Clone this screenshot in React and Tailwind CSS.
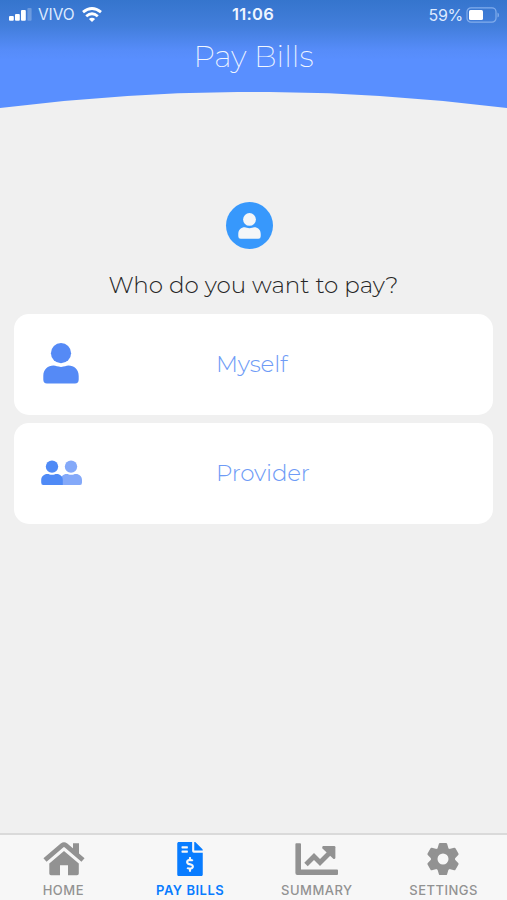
import React from "react";
import { FaFileInvoiceDollar } from "react-icons/fa";

function Person({ className }) {
  return (
    <svg viewBox="0 0 36 41" className={className} fill="currentColor">
      <circle cx="18" cy="10.2" r="10.1" />
      <path d="M.3 36.5V33C.3 26.5 5 22.6 10.5 22.6C13 22.6 14.5 23.9 18 23.9S23 22.6 25.5 22.6C31 22.6 35.7 26.5 35.7 33V36.5Q35.7 40.5 32 40.5H4Q.3 40.5 .3 36.5Z" />
    </svg>
  );
}

function People() {
  return (
    <svg viewBox="0 0 41 25" className="mb-[2px] h-[25px] w-[41px]">
      <g fill="#84a9f9">
        <circle cx="30" cy="6.6" r="6.2" />
        <path d="M19.5 22.5V20C19.5 16.5 22.5 14 25.5 14C27.5 14 28 14.8 30.2 14.8S33 14 35 14C38.2 14 41 16.5 41 20V22.5Q41 25 39 25H21.5Q19.5 25 19.5 22.5Z" />
      </g>
      <g fill="#4f8af6">
        <circle cx="11" cy="6.6" r="6.2" />
        <path d="M.2 22.5V20C.2 16.5 3.2 14 6.2 14C8.2 14 8.8 14.8 11 14.8S13.8 14 15.8 14C19 14 21.8 16.5 21.8 20V25H2.2Q.2 25 .2 22.5Z" />
      </g>
    </svg>
  );
}

function HomeIcon() {
  return (
    <svg viewBox="0 0 42 34" className="ml-[1px] h-[34px] w-[42px]" fill="currentColor">
      <path d="M30 1.2H36V14L30 9Z" />
      <path d="M2 18L19.2 3.3Q21 1.9 22.8 3.3L40 18" fill="none" stroke="currentColor" strokeWidth="4.8" />
      <path d="M21 8.9L35.8 21.5V31.5Q35.8 33.2 34 33.2H25V23.3H17V33.2H8Q6.3 33.2 6.3 31.5V21.5Z" />
    </svg>
  );
}

function ChartIcon() {
  return (
    <svg viewBox="0 0 43 34" className="h-[34px] w-[43px]" fill="currentColor">
      <path d="M1.3 1.2H5.1Q6 1.2 6 2.2V27.5H42.1Q43 27.5 43 28.4V32Q43 32.9 42 32.9H2.3Q.4 32.9 .4 31V2.2Q.4 1.2 1.3 1.2Z" />
      <path d="M11 22.5L19 14.5L25 20.5L35 10.5" fill="none" stroke="currentColor" strokeWidth="4.9" strokeLinejoin="miter" strokeLinecap="butt" />
      <path d="M28 4H39.2Q40.4 4 40.4 5.2V16Q39.6 17.8 38 16.5L27.5 6.4Q26.5 4.7 28 4Z" />
    </svg>
  );
}

function GearIcon() {
  return (
    <svg viewBox="-17 -17 34 34" className="mr-[1px] h-[34px] w-[34px]" fill="none" stroke="currentColor">
      <circle r="8.8" strokeWidth="6.6" />
      <g fill="currentColor" stroke="none">
        {[0, 60, 120, 180, 240, 300].map((angle) => (
          <path key={angle} d="M-5.5-10.5L-4.1-15.2Q-3.9-16.1-3-16.1H3Q3.9-16.1 4.1-15.2L5.5-10.5Z" transform={`rotate(${angle})`} />
        ))}
      </g>
    </svg>
  );
}

function StatusBar() {
  return (
    <div className="flex h-[29px] items-center justify-between pl-[9px] pr-[7px] font-['Inter','Liberation_Sans',sans-serif] text-[16px] text-[#deebff]">
      <div className="flex w-[180px] items-center">
        <svg viewBox="0 0 24 13" className="mr-[5px] h-[13px] w-[24px]" fill="#fff">
          <rect x="0" y="8" width="4.8" height="4.7" rx="1" />
          <rect x="6" y="6" width="4.8" height="6.7" rx="1" />
          <rect x="12" y="2" width="4.8" height="10.7" rx="1" />
          <rect x="18.4" y="0" width="4.2" height="12.7" rx="1" opacity=".25" />
        </svg>
        <span className="w-[38px] text-[15.5px] tracking-[-0.1px]">VIVO</span>
        <svg viewBox="0 0 20 15" className="ml-[6px] h-[15px] w-[20px]" fill="none" stroke="#fff" strokeWidth="2.8">
          <path d="M1 5.2Q10-2.3 19 5.2" />
          <path d="M4.2 9.3Q10 4.3 15.8 9.3" />
          <path d="M10 15L6.9 12Q10 9.4 13.1 12Z" fill="#fff" stroke="none" />
        </svg>
      </div>
      <span className="text-[16.5px] font-semibold tracking-[0.3px] text-[#eef5ff]">11:06</span>
      <div className="flex w-[183px] items-center justify-end">
        <span className="mr-[3px] text-[16px] tracking-[-0.3px]">59%</span>
        <svg viewBox="0 0 34 16" className="h-[16px] w-[34px]">
          <rect x="1" y=".8" width="29" height="14.4" rx="4" fill="none" stroke="#82adec" strokeWidth="1.2" />
          <rect x="3" y="3" width="14" height="10" rx="1.5" fill="#fff" />
          <path d="M31.5 5.5Q33 6 33 8T31.5 10.5Z" fill="#82adec" />
        </svg>
      </div>
    </div>
  );
}

function Choice({ icon, label }) {
  return (
    <button className="flex h-[101px] w-full items-center rounded-[15px] bg-white text-left">
      <span className="flex w-[202px] pl-[27px]">{icon}</span>
      <span className="text-[23px] font-light tracking-[-0.15px] text-[#6e9bf6]">{label}</span>
    </button>
  );
}

function Tab({ icon, label, active, className }) {
  return (
    <div className={`flex flex-1 flex-col items-center ${active ? "text-[#087cff]" : "text-[#929292]"}`}>
      <div className="flex h-[34px] items-center">{icon}</div>
      <span className={`mt-[6px] whitespace-nowrap text-[13px] leading-[16px] ${className}`}>{label}</span>
    </div>
  );
}

export default function App() {
  return (
    <div className="flex h-[900px] w-[507px] flex-col overflow-hidden bg-[#f0f0f0] font-['Montserrat','Inter','Liberation_Sans',sans-serif]">
      <header className="flex h-[109px] flex-col bg-[linear-gradient(#3575cd_0px,#427edb_26px,#568cf9_50px,#598fff_60px)]">
        <StatusBar />
        <h1 className="mt-[10px] h-[36px] text-center text-[30px] leading-[36px] font-extralight text-[#f2f7ff]">
          Pay Bills
        </h1>
        <svg viewBox="0 0 507 17" className="mt-auto block h-[17px] w-full" fill="#f0f0f0">
          <path d="M0 16A2016 2016 0 0 1 507 16V17H0Z" />
        </svg>
      </header>

      <main className="flex flex-1 flex-col items-center px-[14px] pt-[93px]">
        <div className="mr-[8px] flex h-[47px] w-[47px] items-center justify-center rounded-full bg-[#3798fc] text-[#f4f6f8]">
          <Person className="h-[26px] w-[23px]" />
        </div>
        <h2 className="mt-[20px] h-[32px] whitespace-nowrap text-[23px] leading-[32px] font-light text-[#262626]">
          Who do you want to pay?
        </h2>
        <div className="mt-[13px] flex w-full flex-col gap-[8px]">
          <Choice label="Myself" icon={<Person className="mb-[2px] ml-[2px] h-[41px] w-[36px] text-[#558af6]" />} />
          <Choice label="Provider" icon={<People />} />
        </div>
      </main>

      <nav className="flex h-[67px] border-t-2 border-[#dadada] bg-[#f7f7f7] pt-[7px] font-['Inter','Liberation_Sans',sans-serif]">
        <Tab label="HOME" className="font-medium tracking-[0.5px]" icon={<HomeIcon />} />
        <Tab active label="PAY BILLS" className="font-semibold tracking-[0.5px]" icon={<FaFileInvoiceDollar className="h-[34px] w-[26px]" />} />
        <Tab label="SUMMARY" className="font-medium tracking-[0.5px]" icon={<ChartIcon />} />
        <Tab label="SETTINGS" className="font-medium tracking-[0.5px]" icon={<GearIcon />} />
      </nav>
    </div>
  );
}
